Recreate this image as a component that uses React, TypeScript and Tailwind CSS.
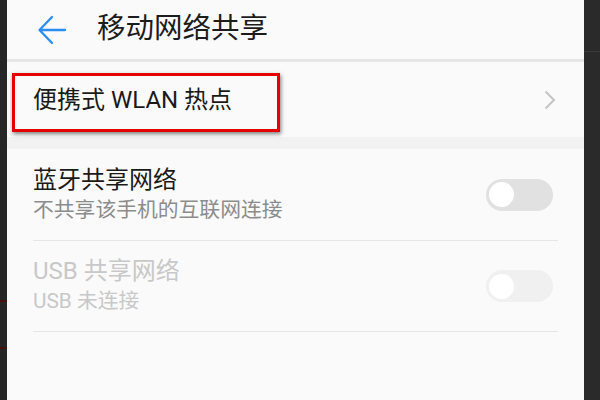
import React from "react";

const font = { fontFamily: "Roboto, 'Noto Sans CJK SC', sans-serif" };

function Toggle({ disabled }: { disabled?: boolean }) {
  return (
    <div
      className={`mr-[5px] flex h-[32px] w-[67px] items-center rounded-full px-[3px] ${
        disabled ? "bg-[#f0f0f0]" : "bg-[#e1e1e1]"
      }`}
    >
      <div className="h-[25px] w-[25px] rounded-full bg-white" />
    </div>
  );
}

export default function App() {
  return (
    <div className="relative flex h-[400px] w-[600px] overflow-hidden bg-[#fafafa]" style={font}>
      <div className="w-[7px] shrink-0 bg-[#262626] flex flex-col">
        <div className="h-[300px]" />
        <div className="h-[2px] bg-[#4a1010]" />
        <div className="h-[45px]" />
        <div className="h-[2px] bg-[#4a1010]" />
      </div>
      <div className="flex min-w-0 flex-1 flex-col bg-[#fafafa]">
        <div className="flex h-[59px] items-center">
          <svg className="ml-[30px]" width="30" height="30" viewBox="0 0 30 30" fill="none">
            <path d="M28 15H2.5M15 2L2.5 15L15 28" stroke="#2b8df0" strokeWidth="2.3" strokeLinecap="round" strokeLinejoin="round" />
          </svg>
          <div className="ml-[30px] text-[28.5px] leading-none text-[#1c1c1c]">移动网络共享</div>
        </div>
        <div className="h-[3px] bg-[#e5e5e5]" />
        <div className="flex h-[75px] items-center justify-between pl-[26px] pr-[28px]">
          <div className="text-[24px] text-[#1a1a1a]">便携式 WLAN 热点</div>
          <svg width="12" height="20" viewBox="0 0 12 20" fill="none">
            <path d="M1.5 1.5L10 10L1.5 18.5" stroke="#c4c4c4" strokeWidth="2" />
          </svg>
        </div>
        <div className="h-[12px] bg-[#f2f2f2]" />
        <div className="mx-[26px] flex h-[92px] items-center justify-between border-b border-[#e6e6e6]">
          <div className="flex flex-col">
            <div className="text-[24px] leading-[30px] text-[#1a1a1a]">蓝牙共享网络</div>
            <div className="text-[20.8px] leading-[30px] text-[#8c8c8c]">不共享该手机的互联网连接</div>
          </div>
          <Toggle />
        </div>
        <div className="mx-[26px] flex h-[91px] items-center justify-between border-b border-[#e6e6e6]">
          <div className="flex flex-col">
            <div className="text-[24px] leading-[30px] text-[#c8c8c8]">USB 共享网络</div>
            <div className="text-[20.8px] leading-[30px] text-[#c8c8c8]">USB 未连接</div>
          </div>
          <Toggle disabled />
        </div>
      </div>
      <div className="w-[16px] shrink-0 bg-[#2a2a2a] flex flex-col">
        <div className="h-[51px]" />
        <div className="h-[1px] bg-[#3a3a3a]" />
      </div>
      <div className="absolute left-[12px] top-[73px] h-[59px] w-[268px] border-[3px] border-[#e40000] shadow-[1px_2px_4px_rgba(0,0,0,0.5)]" />
    </div>
  );
}
